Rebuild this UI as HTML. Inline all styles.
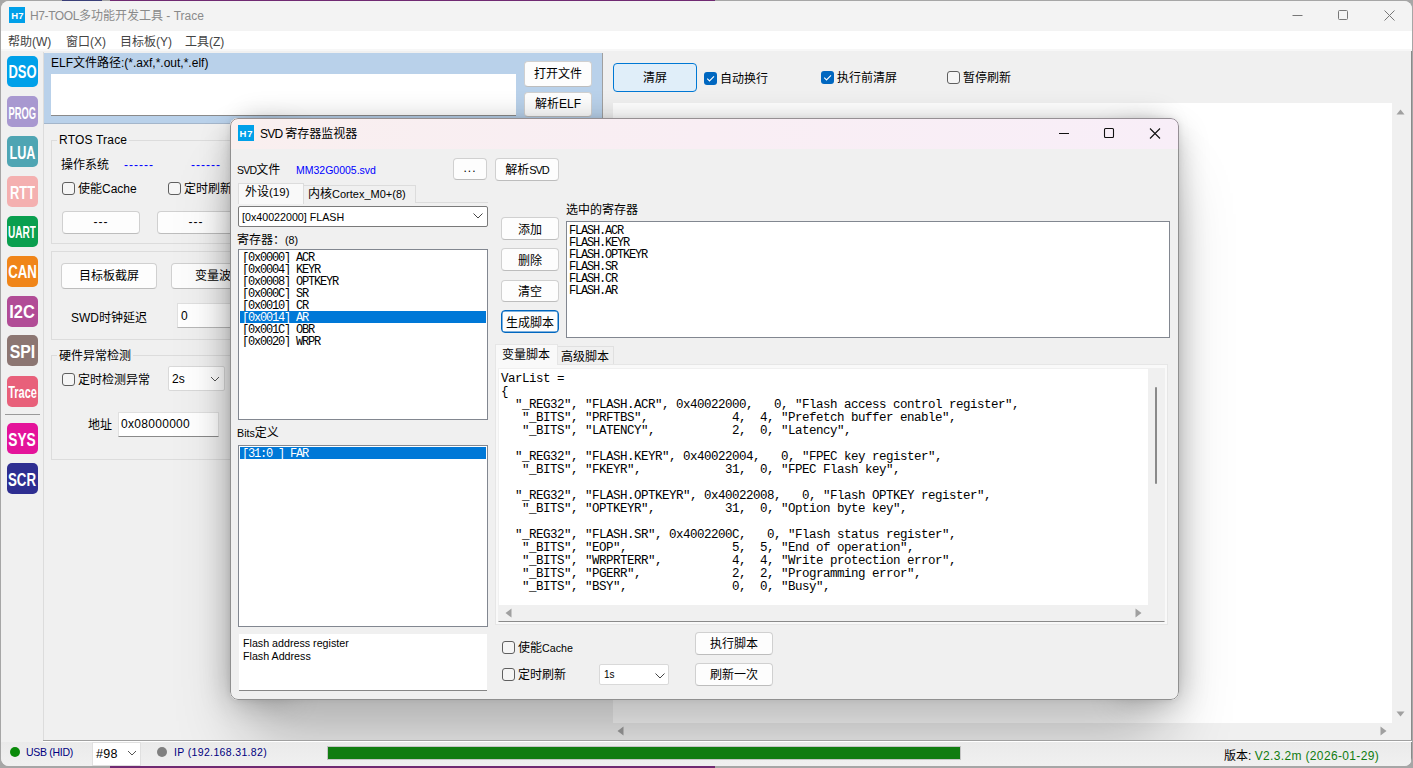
<!DOCTYPE html>
<html lang="zh-CN">
<head>
<meta charset="utf-8">
<title>H7-TOOL多功能开发工具 - Trace</title>
<style>
*{box-sizing:border-box;margin:0;padding:0}
html,body{width:1413px;height:768px;overflow:hidden;background:#a6a6a6}
body{position:relative;font-family:"Liberation Sans","Noto Sans CJK SC",sans-serif;font-size:12px;color:#000}
.abs,.abs-all *{position:absolute}
#win{position:absolute;left:1px;top:1px;width:1411px;height:765px;background:#f0f0f0;border-radius:8px;overflow:hidden}
#win div,#win span,#win svg{position:absolute}
.t{white-space:nowrap;line-height:16px;height:16px}
.btn{background:#fdfdfd;border:1px solid #d0d0d0;border-bottom-color:#bdbdbd;border-radius:4px;text-align:center;white-space:nowrap}
.sb{border-radius:5px;color:#fff;font-weight:bold;width:31px;height:31px;left:5.700px;padding-top:3px;line-height:31px;white-space:nowrap;display:flex;justify-content:center;align-items:center}
.sb span{position:static!important;display:block;flex:none;transform-origin:center}
.cb{width:13px;height:13px;border:1px solid #5f5f5f;border-radius:3px;background:#f5f5f5}
.cbc{width:13px;height:13px;border-radius:3px;background:#0067c0}
.mono{font-family:"Liberation Mono","Noto Sans CJK SC",monospace;white-space:pre}

#dlg{position:absolute;left:230px;top:118px;width:948.500px;height:581.700px;background:#f0f0f0;border-radius:8px;overflow:hidden}
#dlgsh{position:absolute;left:229.500px;top:118px;width:949px;height:581.700px;border-radius:8px;box-shadow:0 48px 64px -16px rgba(0,0,0,.29),0 0 6px rgba(0,0,0,.08)}
.shs{position:absolute;top:132px;width:60px;height:567.700px;box-shadow:0 0 30px rgba(0,0,0,.26)}
#shclip{position:absolute;left:0;top:0;width:1413px;height:740px;overflow:hidden}
#dlg div,#dlg span.a,#dlg svg{position:absolute}
#dlg .l{font-size:10.7px}
#dlg .lb{background:#fff;border:1px solid #828790;font-family:"Liberation Mono","Noto Sans CJK SC",monospace;font-size:12px;letter-spacing:-1.2px;overflow:hidden}
#dlg .lb div{left:1px;width:246px;height:12px;line-height:12px;white-space:pre;padding-left:2px;padding-top:1px;overflow:hidden}
#dlg .lb div.sel{background:#0078d7;color:#fff}
</style>
</head>
<body>
<div style="position:absolute;left:110px;top:0;width:605px;height:768px;background:#702a72"></div>
<div style="position:absolute;left:62px;top:0;width:40px;height:1px;background:#3a3f78"></div>
<div id="win">
  <!-- title bar -->
  <div style="left:0;top:0;width:1411px;height:30px;background:#f3f3f3"></div>
  <div style="left:8px;top:6px;width:16px;height:16px;background:#00a0e9;color:#fff;font-weight:bold;font-size:9.500px;line-height:17px;text-align:center;letter-spacing:.9px;padding-left:.9px;letter-spacing:0">H7</div>
  <div class="t" style="left:29px;top:7px;color:#8a8a8a;font-size:12px"><span style="position:static!important;letter-spacing:-.4px">H7-TOOL</span>多功能开发工具 - Trace</div>
  <svg style="left:1280px;top:0" width="131" height="30" viewBox="0 0 131 30" fill="none" stroke="#777" stroke-width="1">
    <path d="M11.5 14.5h10"/>
    <rect x="57.500" y="9.500" width="9" height="9" rx="1"/>
    <path d="M103.500 9.500l10 10M113.500 9.500l-10 10"/>
  </svg>
  <!-- menu bar -->
  <div style="left:0;top:30px;width:1411px;height:18px;background:#fff"></div>
  <div style="left:0;top:48px;width:1411px;height:2px;background:#f7f7f7"></div>
  <div class="t" style="left:7px;top:33px;color:#444">帮助(W)</div>
  <div class="t" style="left:65px;top:33px;color:#444">窗口(X)</div>
  <div class="t" style="left:119px;top:33px;color:#444">目标板(Y)</div>
  <div class="t" style="left:184px;top:33px;color:#444">工具(Z)</div>

  <!-- sidebar -->
  <div style="left:42px;top:51px;width:1px;height:689px;background:#dcdcdc"></div>
  <div class="sb" style="top:54.5px;background:#00a0e9;font-size:18px"><span style="transform:scaleX(0.72)">DSO</span></div>
  <div class="sb" style="top:95px;background:#a898d0;font-size:16.5px"><span style="transform:scaleX(0.566)">PROG</span></div>
  <div class="sb" style="top:135px;background:#4fa5b3;font-size:18px"><span style="transform:scaleX(0.7)">LUA</span></div>
  <div class="sb" style="top:175px;background:#f4b0b0;font-size:18px"><span style="transform:scaleX(0.714)">RTT</span></div>
  <div class="sb" style="top:214.5px;background:#0a9f4f;font-size:16.5px"><span style="transform:scaleX(0.61)">UART</span></div>
  <div class="sb" style="top:254.5px;background:#f08519;font-size:18px"><span style="transform:scaleX(0.736)">CAN</span></div>
  <div class="sb" style="top:294.5px;background:#b14c96;font-size:18px"><span style="transform:scaleX(0.914)">I2C</span></div>
  <div class="sb" style="top:334px;background:#8c7672;font-size:18px"><span style="transform:scaleX(0.88)">SPI</span></div>
  <div class="sb" style="top:374.5px;background:#e8607a;font-size:16.5px"><span style="transform:scaleX(0.666)">Trace</span></div>
  <div style="left:4px;top:413px;width:35px;height:1px;background:#9a9a9a"></div>
  <div class="sb" style="top:422px;background:#e4139a;font-size:18px"><span style="transform:scaleX(0.763)">SYS</span></div>
  <div class="sb" style="top:462px;background:#2e2e91;font-size:18px"><span style="transform:scaleX(0.737)">SCR</span></div>

  <!-- ELF panel -->
  <div style="left:43px;top:52px;width:558px;height:71px;background:#b9d1ea;border-bottom:1px solid #a4b6cb"></div>
  <div class="t" style="left:50px;top:54px">ELF文件路径:(*.axf,*.out,*.elf)</div>
  <div style="left:50px;top:73px;width:465px;height:42px;background:#fff;border-bottom:1px solid #8a8a8a"></div>
  <div class="btn" style="left:523px;top:59.500px;width:68px;height:26.500px;line-height:25px">打开文件</div>
  <div class="btn" style="left:523px;top:91px;width:68px;height:25px;line-height:23px">解析ELF</div>
  <div style="left:601px;top:52px;width:1px;height:71px;background:#a0a0a0"></div>

  <!-- left panel groups -->
  <div style="left:50px;top:139px;width:300px;height:104px;border:1px solid #dcdcdc"></div>
  <div class="t" style="left:56px;top:131px;background:#f0f0f0;padding:0 2px;letter-spacing:.2px">RTOS Trace</div>
  <div class="t" style="left:60px;top:156px">操作系统</div>
  <div class="t" style="left:123px;top:156px;color:#0000ff;letter-spacing:1px">------</div>
  <div class="t" style="left:190px;top:156px;color:#0000ff;letter-spacing:1px">------</div>
  <div class="cb" style="left:61px;top:181px"></div>
  <div class="t" style="left:77px;top:180px">使能Cache</div>
  <div class="cb" style="left:167px;top:181px"></div>
  <div class="t" style="left:183px;top:180px">定时刷新</div>
  <div class="btn" style="left:61px;top:210px;width:78px;height:23px;line-height:21px;letter-spacing:1px">---</div>
  <div class="btn" style="left:156px;top:210px;width:78px;height:23px;line-height:21px;letter-spacing:1px">---</div>

  <div style="left:50px;top:250px;width:300px;height:89px;border:1px solid #dcdcdc"></div>
  <div class="btn" style="left:60px;top:262px;width:96px;height:26px;line-height:24px">目标板截屏</div>
  <div class="btn" style="left:170px;top:262px;width:96px;height:26px;line-height:24px">变量波形</div>
  <div class="t" style="left:70px;top:309px">SWD时钟延迟</div>
  <div style="left:176px;top:302px;width:80px;height:25px;background:#fff;border:1px solid #e0e0e0;border-bottom-color:#b8b8b8"></div>
  <div class="t" style="left:180px;top:307px">0</div>

  <div style="left:50px;top:354px;width:300px;height:105px;border:1px solid #dcdcdc"></div>
  <div class="t" style="left:56px;top:347px;background:#f0f0f0;padding:0 2px">硬件异常检测</div>
  <div class="cb" style="left:61px;top:372px"></div>
  <div class="t" style="left:77px;top:371px">定时检测异常</div>
  <div style="left:167px;top:365px;width:57px;height:25px;background:#fff;border:1px solid #d9d9d9;border-radius:2px"></div>
  <div class="t" style="left:171px;top:370px">2s</div>
  <svg style="left:209px;top:375px" width="10" height="6" viewBox="0 0 10 6" fill="none" stroke="#555" stroke-width="1"><path d="M1 1l4 4 4-4"/></svg>
  <div class="t" style="left:87px;top:416px">地址</div>
  <div style="left:117px;top:411px;width:101px;height:25px;background:#fff;border:1px solid #e0e0e0;border-bottom-color:#8a8a8a"></div>
  <div class="t" style="left:120px;top:415px;letter-spacing:.3px">0x08000000</div>

  <!-- right panel -->
  <div style="left:612px;top:62px;width:84px;height:29px;background:#e0eef9;border:1px solid #0078d4;border-radius:4px;text-align:center;line-height:29px">清屏</div>
  <div class="cbc" style="left:703px;top:71px"><svg style="left:0;top:0" width="13" height="13" viewBox="0 0 13 13" fill="none" stroke="#fff" stroke-width="1.1"><path d="M3.200 6.700l2.300 2.300 4.500-4.700"/></svg></div>
  <div class="t" style="left:719px;top:70px">自动换行</div>
  <div class="cbc" style="left:820px;top:70px"><svg style="left:0;top:0" width="13" height="13" viewBox="0 0 13 13" fill="none" stroke="#fff" stroke-width="1.1"><path d="M3.200 6.700l2.300 2.300 4.500-4.700"/></svg></div>
  <div class="t" style="left:836px;top:69px">执行前清屏</div>
  <div class="cb" style="left:946px;top:70px"></div>
  <div class="t" style="left:962px;top:69px">暂停刷新</div>
  <div style="left:612px;top:102px;width:779px;height:620px;background:#fff"></div>
  <svg style="left:1395px;top:108px" width="9" height="6" viewBox="0 0 9 6"><path d="M0.500 5.500h8l-4-5z" fill="#a0a0a0"/></svg>
  <svg style="left:1395px;top:710px" width="9" height="6" viewBox="0 0 9 6"><path d="M0.500 0.500h8l-4 5z" fill="#a0a0a0"/></svg>
  <svg style="left:616px;top:725px" width="7" height="10" viewBox="0 0 7 10"><path d="M6.500 0.500v9l-6-4.500z" fill="#a0a0a0"/></svg>
  <svg style="left:1379px;top:725px" width="7" height="10" viewBox="0 0 7 10"><path d="M0.500 0.500v9l6-4.500z" fill="#a0a0a0"/></svg>
  <div style="left:1410px;top:50px;width:1px;height:715px;background:#8a8a8a"></div>

  <!-- status bar -->
  <div style="left:0;top:741px;width:1410px;height:24px;background:linear-gradient(180deg,#eaeaea,#f0f0f0)"></div>
  <div style="left:42px;top:739px;width:1369px;height:1px;background:#a0a0a0"></div>
  <div style="left:42px;top:740px;width:1369px;height:1px;background:#fff"></div>
  <div style="left:9px;top:746px;width:10px;height:10px;border-radius:5px;background:#0a8a0a"></div>
  <div class="t" style="left:25px;top:743px;color:#000080;font-size:10.500px;letter-spacing:-.3px">USB (HID)</div>
  <div style="left:91px;top:741px;width:49px;height:24px;background:#fff;border:1px solid #e0e0e0"></div>
  <div class="t" style="left:95px;top:745px;font-size:12.500px;letter-spacing:.3px">#98</div>
  <svg style="left:126px;top:749px" width="10" height="6" viewBox="0 0 10 6" fill="none" stroke="#555" stroke-width="1"><path d="M1 1l4 4 4-4"/></svg>
  <div style="left:156px;top:746px;width:10px;height:10px;border-radius:5px;background:#808080"></div>
  <div class="t" style="left:173px;top:743px;color:#000080;font-size:10.500px;letter-spacing:.35px">IP (192.168.31.82)</div>
  <div style="left:327px;top:745.700px;width:632px;height:12.300px;background:#107c10;box-shadow:0 0 0 1px #c4c4c4"></div>
  <div class="t" style="left:1223px;top:747px">版本: <span style="position:static!important;color:#107c10;letter-spacing:.35px">V2.3.2m (2026-01-29)</span></div>
</div>

<div id="shclip"><div id="dlgsh"></div><div style="position:absolute;left:245px;top:118px;width:918px;height:40px;box-shadow:0 0 28px rgba(0,0,0,.2)"></div><div class="shs" style="left:229.500px;border-radius:8px 0 0 8px"></div><div class="shs" style="left:1118.500px;border-radius:0 8px 8px 0"></div></div>
<!-- SVD dialog -->
<div id="dlg">
  <div style="left:0;top:0;width:949px;height:30.5px;background:linear-gradient(90deg,#f9efef 0%,#f9eef4 50%,#f8eef8 100%)"></div>
  <div style="left:8px;top:7px;width:16px;height:16px;background:#00a0e9;color:#fff;font-weight:bold;font-size:9.500px;line-height:17px;text-align:center;letter-spacing:.9px;padding-left:.9px">H7</div>
  <div class="t" style="left:30px;top:8px;font-size:12px"><span style="letter-spacing:-.7px">SVD </span>寄存器监视器</div>
  <svg style="left:820px;top:0" width="128" height="30" viewBox="0 0 128 30" fill="none" stroke="#111" stroke-width="1.1">
    <path d="M9 15.500h10"/>
    <rect x="54.500" y="10.500" width="9" height="9" rx="1"/>
    <path d="M100 10.500l10 10M110 10.500l-10 10"/>
  </svg>

  <div class="t" style="left:7px;top:44px"><span style="font-size:10.500px;letter-spacing:-.8px">SVD</span>文件</div>
  <div class="t" style="left:66px;top:44px;color:#0000ff;font-size:10.5px">MM32G0005.svd</div>
  <div class="btn" style="left:223px;top:39.500px;width:34px;height:22.500px;line-height:19px;letter-spacing:1px">...</div>
  <div class="btn" style="left:265px;top:40px;width:64px;height:22.500px;line-height:22px">解析<span style="font-size:11px;letter-spacing:-1px">SVD</span></div>

  <!-- tabs 1 -->
  <div style="left:8px;top:84px;width:250px;height:1px;background:#dcdcdc"></div>
  <div style="left:73px;top:67px;width:113px;height:18px;border:1px solid #dcdcdc;border-bottom:none;background:#f0f0f0"></div>
  <div style="left:8px;top:65px;width:66px;height:21px;border:1px solid #dcdcdc;border-bottom:none;background:#f9f9f9"></div>
  <div class="t" style="left:15px;top:66px">外设<span style="font-size:11.5px">(19)</span></div>
  <div class="t" style="left:78px;top:68px">内核<span style="font-size:11px">Cortex_M0+(8)</span></div>

  <div style="left:8px;top:87.500px;width:250px;height:21.500px;background:#fff;border:1px solid #7a7a7a;border-radius:2px"></div>
  <div class="t l" style="left:12px;top:91px">[0x40022000] FLASH</div>
  <svg style="left:243px;top:95px" width="10" height="6" viewBox="0 0 10 6" fill="none" stroke="#444" stroke-width="1"><path d="M0.500 0.500l4.500 4.500 4.500-4.500"/></svg>

  <div class="t" style="left:7px;top:114px">寄存器：<span class="l">(8)</span></div>
  <div class="lb" style="left:8px;top:131px;width:250px;height:171px">
<div style="top:1px">[0x0000] ACR</div>
<div style="top:13px">[0x0004] KEYR</div>
<div style="top:25px">[0x0008] OPTKEYR</div>
<div style="top:37px">[0x000C] SR</div>
<div style="top:49px">[0x0010] CR</div>
<div class="sel" style="top:61px">[0x0014] AR</div>
<div style="top:73px">[0x001C] OBR</div>
<div style="top:85px">[0x0020] WRPR</div>
  </div>
  <div class="t" style="left:7px;top:307px"><span class="l">Bits</span>定义</div>
  <div class="lb" style="left:8px;top:327px;width:250px;height:182px">
<div class="sel" style="top:1px">[31:0 ] FAR</div>
  </div>
  <div style="left:9px;top:516px;width:248px;height:57px;background:#fff;border-bottom:1px solid #868686"></div>
  <div class="t l" style="left:13px;top:517px">Flash address register</div>
  <div class="t l" style="left:13px;top:530px">Flash Address</div>

  <!-- middle buttons -->
  <div class="btn" style="left:271px;top:99.1px;width:58px;height:22.600px;line-height:25px">添加</div>
  <div class="btn" style="left:271px;top:130.3px;width:58px;height:22.600px;line-height:25px">删除</div>
  <div class="btn" style="left:271px;top:161.5px;width:58px;height:22.600px;line-height:22.500px">清空</div>
  <div class="btn" style="left:271px;top:192.300px;width:58px;height:22.600px;line-height:25px;border:1px solid #0067c0;box-shadow:inset 0 0 0 .5px #0067c0">生成脚本</div>

  <div class="t" style="left:336px;top:84px">选中的寄存器</div>
  <div class="lb" style="left:336px;top:103px;width:604px;height:116.600px">
<div style="top:2px;left:0px">FLASH.ACR</div>
<div style="top:14px;left:0px">FLASH.KEYR</div>
<div style="top:26px;left:0px">FLASH.OPTKEYR</div>
<div style="top:38px;left:0px">FLASH.SR</div>
<div style="top:50px;left:0px">FLASH.CR</div>
<div style="top:62px;left:0px">FLASH.AR</div>
  </div>

  <!-- tabs 2 -->
  <div style="left:265px;top:246px;width:673px;height:261px;border:1px solid #e6e6e6;background:#f9f9f9"></div>
  <div style="left:327px;top:228px;width:57px;height:18px;border:1px solid #e0e0e0;border-bottom:none;background:#f0f0f0"></div>
  <div style="left:265px;top:226px;width:63px;height:21px;border:1px solid #e6e6e6;border-bottom:none;background:#f9f9f9"></div>
  <div class="t" style="left:272px;top:229px">变量脚本</div>
  <div class="t" style="left:331px;top:231px">高级脚本</div>
  <div style="left:268px;top:250px;width:667px;height:254px;background:#fff;border:1px solid #f0f0f0;border-bottom-color:#8a8a8a"></div>
  <div style="left:918px;top:251px;width:16px;height:252px;background:#f0f0f0"></div>
  <div style="left:269px;top:487px;width:665px;height:16px;background:#f0f0f0"></div>
  <div style="left:925px;top:269px;width:2px;height:97px;background:#8a8a8a;border-radius:1px"></div>
  <svg style="left:275px;top:490px" width="7" height="10" viewBox="0 0 7 10"><path d="M6.500 0.500v9l-6-4.500z" fill="#a0a0a0"/></svg>
  <svg style="left:905px;top:490px" width="7" height="10" viewBox="0 0 7 10"><path d="M0.500 0.500v9l6-4.500z" fill="#a0a0a0"/></svg>
  <div class="mono" id="script" style="left:271px;top:255px;font-size:12.500px;letter-spacing:-0.5px;line-height:13px">VarList =
{
  "_REG32", "FLASH.ACR", 0x40022000,   0, "Flash access control register",
   "_BITS", "PRFTBS",            4,  4, "Prefetch buffer enable",
   "_BITS", "LATENCY",           2,  0, "Latency",

  "_REG32", "FLASH.KEYR", 0x40022004,   0, "FPEC key register",
   "_BITS", "FKEYR",            31,  0, "FPEC Flash key",

  "_REG32", "FLASH.OPTKEYR", 0x40022008,   0, "Flash OPTKEY register",
   "_BITS", "OPTKEYR",          31,  0, "Option byte key",

  "_REG32", "FLASH.SR", 0x4002200C,   0, "Flash status register",
   "_BITS", "EOP",               5,  5, "End of operation",
   "_BITS", "WRPRTERR",          4,  4, "Write protection error",
   "_BITS", "PGERR",             2,  2, "Programming error",
   "_BITS", "BSY",               0,  0, "Busy",</div>

  <!-- bottom controls -->
  <div class="cb" style="left:272px;top:523px"></div>
  <div class="t" style="left:288px;top:522px">使能<span class="l">Cache</span></div>
  <div class="cb" style="left:272px;top:550px"></div>
  <div class="t" style="left:288px;top:549px">定时刷新</div>
  <div style="left:369px;top:546px;width:70px;height:21px;background:#fff;border:1px solid #d9d9d9;border-radius:2px"></div>
  <div class="t" style="left:374px;top:549px;font-size:10px">1s</div>
  <svg style="left:425px;top:554.500px" width="10" height="6" viewBox="0 0 10 6" fill="none" stroke="#444" stroke-width="1"><path d="M0.500 0.500l4.500 4.500 4.500-4.500"/></svg>
  <div class="btn" style="left:465px;top:513.800px;width:78px;height:23.200px;line-height:22.500px">执行脚本</div>
  <div class="btn" style="left:465px;top:545px;width:78px;height:23px;line-height:23px">刷新一次</div>
  <div style="left:-.5px;top:0;width:949px;height:581.700px;border:1px solid rgba(0,0,0,.40);border-radius:8px"></div>
</div>
</body>
</html>
